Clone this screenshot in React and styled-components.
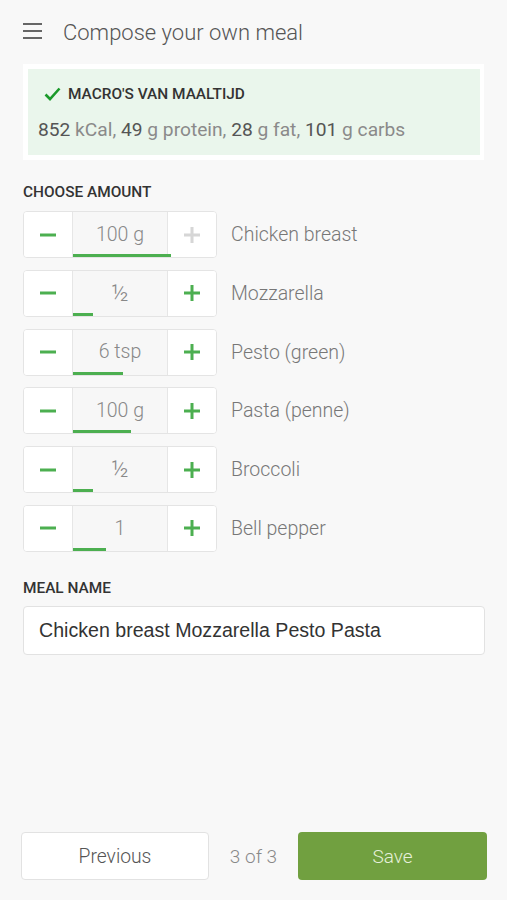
import React from 'react';
import styled, { createGlobalStyle } from 'styled-components';

const GlobalStyle = createGlobalStyle`
	html, body {
		margin: 0;
		padding: 0;
		background: #f8f8f8;
	}
	* {
		box-sizing: border-box;
	}
`;

const ingredients = [
	{ amount: '100 g', name: 'Chicken breast', fill: 98, maxed: true },
	{ amount: '½', name: 'Mozzarella', fill: 20, small: true },
	{ amount: '6 tsp', name: 'Pesto (green)', fill: 50 },
	{ amount: '100 g', name: 'Pasta (penne)', fill: 58 },
	{ amount: '½', name: 'Broccoli', fill: 20, small: true },
	{ amount: '1', name: 'Bell pepper', fill: 33 }
];

function MinusIcon() {
	return (
		<svg width="18" height="18" viewBox="0 0 18 18">
			<rect x="1" y="7.5" width="16" height="3" fill="#4caf50" />
		</svg>
	);
}

function PlusIcon({ disabled }) {
	const color = disabled ? '#d6d6d6' : '#4caf50';
	return (
		<svg width="18" height="18" viewBox="0 0 18 18">
			<rect x="1" y="7.5" width="16" height="3" fill={color} />
			<rect x="7.5" y="1" width="3" height="16" fill={color} />
		</svg>
	);
}

function Stepper({ amount, name, fill, maxed, small }) {
	return (
		<Row>
			<StepperBox>
				<StepButton>
					<MinusIcon />
				</StepButton>
				<Amount small={small}>
					{amount}
					<Progress style={{ width: fill }} />
				</Amount>
				<StepButton>
					<PlusIcon disabled={maxed} />
				</StepButton>
			</StepperBox>
			<IngredientName>{name}</IngredientName>
		</Row>
	);
}

export default function App() {
	return (
		<Page>
			<GlobalStyle />
			<Header>
				<Burger>
					<span />
					<span />
					<span />
				</Burger>
				<Title>Compose your own meal</Title>
			</Header>

			<MacroCard>
				<MacroInner>
					<MacroTitle>
						<svg width="17" height="14" viewBox="0 0 17 14">
							<path d="M1.5 7.5 L6 12 L15.5 1.5" fill="none" stroke="#1a9a2a" strokeWidth="2.6" />
						</svg>
						MACRO'S VAN MAALTIJD
					</MacroTitle>
					<MacroValues>
						<b>852</b> kCal, <b>49</b> g protein, <b>28</b> g fat, <b>101</b> g carbs
					</MacroValues>
				</MacroInner>
			</MacroCard>

			<Section>
				<SectionLabel>CHOOSE AMOUNT</SectionLabel>
				<StepperList>
					{ingredients.map((item, i) => (
						<Stepper key={i} {...item} />
					))}
				</StepperList>
			</Section>

			<Section>
				<MealLabel>MEAL NAME</MealLabel>
				<NameInput>Chicken breast Mozzarella Pesto Pasta</NameInput>
			</Section>

			<Footer>
				<PrevButton>Previous</PrevButton>
				<PageCount>3 of 3</PageCount>
				<SaveButton>Save</SaveButton>
			</Footer>
		</Page>
	);
}

const Page = styled.div`
	height: 900px;
	display: flex;
	flex-direction: column;
	background: #f8f8f8;
	font-family: Roboto, "Noto Sans", sans-serif;
`;

const Header = styled.div`
	height: 64px;
	display: flex;
	align-items: center;
	padding: 0 23px 0 23px;
	gap: 21px;
`;

const Burger = styled.div`
	width: 19px;
	display: flex;
	flex-direction: column;
	gap: 5px;
	margin-top: -2px;

	& span {
		display: block;
		height: 2px;
		background: #666;
	}
`;

const Title = styled.h1`
	margin: 0;
	font-size: 22px;
	font-weight: 300;
	color: #555;
	margin-top: 1px;
`;

const MacroCard = styled.div`
	margin: 0 23px;
	padding: 5px 4px 5px 5px;
	background: #fff;
`;

const MacroInner = styled.div`
	background: #eaf6ec;
	height: 86px;
	padding: 15px 10px 0 10px;
`;

const MacroTitle = styled.div`
	display: flex;
	align-items: center;
	gap: 7px;
	padding-left: 6px;
	font-size: 15.4px;
	font-weight: 500;
	color: #333;
	height: 20px;
`;

const MacroValues = styled.div`
	margin-top: 14px;
	font-size: 19.2px;
	font-weight: 400;
	color: #8a8a8a;

	& b {
		font-weight: 400;
		color: #555;
	}
`;

const Section = styled.div`
	padding: 0 22px 0 23px;
`;

const SectionLabel = styled.div`
	margin-top: 22px;
	height: 20px;
	font-size: 15.4px;
	font-weight: 500;
	color: #333;
	display: flex;
	align-items: center;
`;

const StepperList = styled.div`
	margin-top: 9px;
	display: flex;
	flex-direction: column;
	gap: 11.8px;
`;

const Row = styled.div`
	display: flex;
	align-items: center;
	gap: 14px;
`;

const StepperBox = styled.div`
	width: 194px;
	height: 47px;
	display: grid;
	grid-template-columns: 48px 1fr 48px;
	border: 1px solid #e4e4e4;
	border-radius: 4px;
	background: #fff;
	overflow: hidden;
`;

const StepButton = styled.div`
	display: flex;
	align-items: center;
	justify-content: center;
	background: #fff;
`;

const Amount = styled.div`
	position: relative;
	display: flex;
	align-items: center;
	justify-content: center;
	background: #f7f7f7;
	border-left: 1px solid #e6e6e6;
	border-right: 1px solid #e6e6e6;
	font-size: ${(p) => (p.small ? '23px' : '19.5px')};
	line-height: 1;
	font-weight: 300;
	color: #888;
`;

const Progress = styled.div`
	position: absolute;
	left: 0;
	bottom: 0;
	height: 3px;
	background: #4caf50;
`;

const IngredientName = styled.div`
	font-size: 19.5px;
	font-weight: 300;
	color: #777;
`;

const MealLabel = styled(SectionLabel)`
	margin-top: 26px;
`;

const NameInput = styled.div`
	margin-top: 8px;
	height: 49px;
	width: 462px;
	display: flex;
	align-items: center;
	padding: 0 15px;
	background: #fff;
	border: 1px solid #e2e2e2;
	border-radius: 4px;
	font-family: "Liberation Sans", Arial, sans-serif;
	font-size: 19.6px;
	color: #333;
`;

const Footer = styled.div`
	margin-top: auto;
	display: flex;
	align-items: center;
	padding: 0 20px 20px 21px;
	height: 68px;
`;

const PrevButton = styled.div`
	width: 188px;
	height: 48px;
	display: flex;
	align-items: center;
	justify-content: center;
	background: #fff;
	border: 1px solid #e2e2e2;
	border-radius: 4px;
	font-size: 19.3px;
	font-weight: 300;
	color: #555;
`;

const PageCount = styled.div`
	width: 89px;
	text-align: center;
	font-size: 19px;
	font-weight: 300;
	color: #888;
`;

const SaveButton = styled.div`
	width: 189px;
	height: 48px;
	display: flex;
	align-items: center;
	justify-content: center;
	background: #71a040;
	border-radius: 4px;
	font-size: 19px;
	font-weight: 300;
	color: #e6f0da;
`;
